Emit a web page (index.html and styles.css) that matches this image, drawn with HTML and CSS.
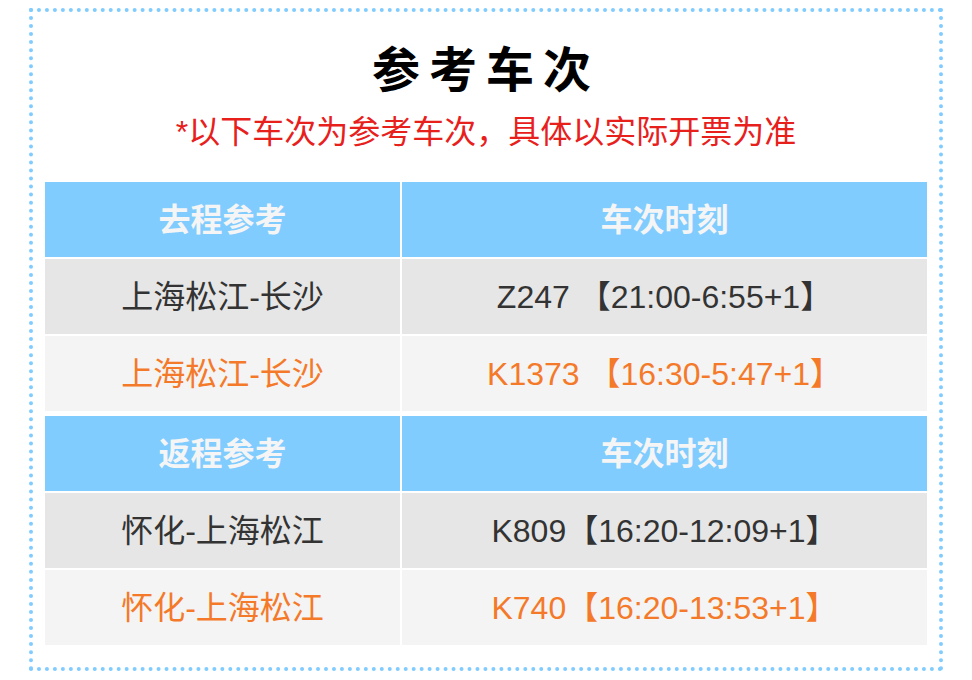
FILE: index.html
```html
<!DOCTYPE html>
<html lang="zh-CN">
<head>
<meta charset="utf-8">
<title>参考车次</title>
<link rel="stylesheet" href="styles.css">
</head>
<body>
<div class="frame">
  <h1 class="title">参考车次</h1>
  <p class="note">*以下车次为参考车次，具体以实际开票为准</p>
  <div class="tbl">
    <div class="cell head">去程参考</div>
    <div class="cell head">车次时刻</div>
    <div class="cell odd">上海松江-长沙</div>
    <div class="cell odd">Z247 【21:00-6:55+1】</div>
    <div class="cell even hl">上海松江-长沙</div>
    <div class="cell even hl">K1373 【16:30-5:47+1】</div>
  </div>
  <div class="tbl">
    <div class="cell head">返程参考</div>
    <div class="cell head">车次时刻</div>
    <div class="cell odd">怀化-上海松江</div>
    <div class="cell odd">K809【16:20-12:09+1】</div>
    <div class="cell even hl">怀化-上海松江</div>
    <div class="cell even hl">K740【16:20-13:53+1】</div>
  </div>
</div>
</body>
</html>
```

FILE: styles.css
```css
html, body {
  margin: 0;
  padding: 0;
  background: #ffffff;
}
body {
  font-family: "Liberation Sans", "Noto Sans CJK SC", sans-serif;
  color: #333333;
}
.frame {
  box-sizing: border-box;
  width: 914px;
  height: 663px;
  margin: 8px 0 0 29px;
  border: 4px dotted #80ccff;
  padding: 24px 12px 0 12px;
  display: flex;
  flex-direction: column;
}
.title {
  margin: 0;
  font-family: "Noto Sans CJK SC", sans-serif;
  font-size: 48px;
  font-weight: 700;
  line-height: 60px;
  letter-spacing: 9px;
  text-align: center;
  color: #000000;
}
.note {
  margin: 16px 0 0 0;
  font-size: 32px;
  line-height: 40px;
  text-align: center;
  color: #e8201c;
}
.tbl {
  margin-top: 30px;
  display: grid;
  grid-template-columns: 355px 525px;
  grid-auto-rows: 75px;
  gap: 2px;
}
.tbl + .tbl {
  margin-top: 5px;
}
.cell {
  display: flex;
  align-items: center;
  justify-content: center;
  box-sizing: border-box;
  padding-bottom: 6px;
  font-size: 32px;
  white-space: nowrap;
}
.head {
  background: #80ccff;
  color: #f5f5f5;
  font-weight: 700;
  font-family: "Noto Sans CJK SC", sans-serif;
}
.odd {
  background: #e6e6e6;
  color: #333333;
}
.even {
  background: #f4f4f4;
}
.hl {
  color: #f47a2a;
}
```
